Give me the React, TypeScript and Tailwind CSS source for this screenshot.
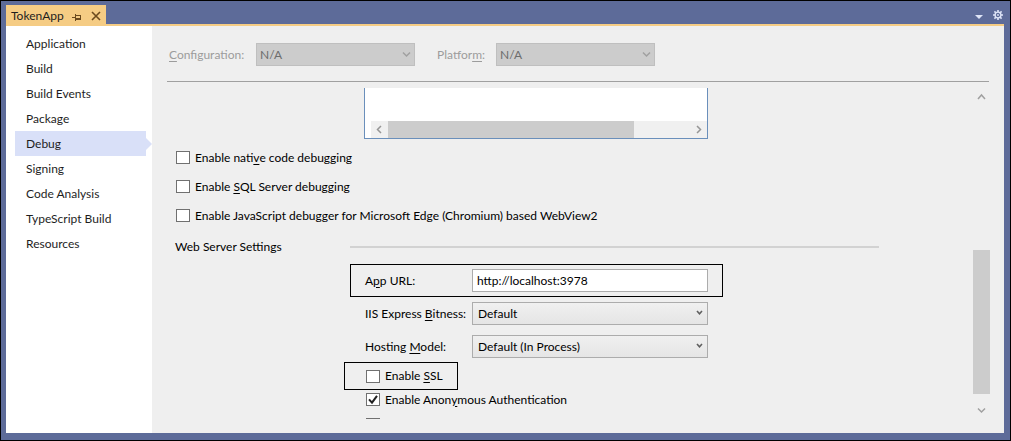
import type { ReactNode } from "react";

const pages = [
  "Application",
  "Build",
  "Build Events",
  "Package",
  "Debug",
  "Signing",
  "Code Analysis",
  "TypeScript Build",
  "Resources",
];

function Key({ children }: { children: ReactNode }) {
  return <span className="underline underline-offset-2">{children}</span>;
}

function Chevron({ className, d, size = 9 }: { className: string; d: string; size?: number }) {
  return (
    <svg className={className} width={size} height={size} viewBox="0 0 9 9" fill="none" stroke="currentColor" aria-hidden="true">
      <path d={d} strokeWidth="1.5" />
    </svg>
  );
}

const DOWN = "M1 2.5 4.5 6 8 2.5";
const UP = "M1 7 4.5 3 8 7";
const LEFT = "M6 1 2.5 4.5 6 8";
const RIGHT = "M3 1 6.5 4.5 3 8";

function DisabledSelect({ id, label }: { id: string; label: ReactNode }) {
  return (
    <div className="flex items-center">
      <label htmlFor={id} className="text-[#9c9c9c]">
        {label}
      </label>
      <div className="relative ml-auto w-[159px]">
        <select
          id={id}
          disabled
          className="block h-[23px] w-full appearance-none border border-[#bfbfbf] bg-[#cccccc] px-[3px] text-[#6d6d6d] opacity-100"
        >
          <option>N/A</option>
        </select>
        <Chevron className="pointer-events-none absolute right-1 top-[7px] text-[#a0a0a0]" d={DOWN} />
      </div>
    </div>
  );
}

function FormSelect({ id, label, value }: { id: string; label: ReactNode; value: string }) {
  return (
    <div className="ml-[190px] flex items-center">
      <label htmlFor={id} className="w-[107px] shrink-0 whitespace-nowrap">
        {label}
      </label>
      <div className="relative w-[236px]">
        <select
          id={id}
          className="block h-[23px] w-full appearance-none border border-[#acacac] bg-linear-to-b from-[#f0f0f0] to-[#e5e5e5] px-[5px] text-black"
        >
          <option>{value}</option>
        </select>
        <svg className="pointer-events-none absolute right-[5px] top-2 text-[#606060]" width="7" height="6" viewBox="0 0 7 6" fill="none" stroke="currentColor" aria-hidden="true">
          <path d="M1 1 3.5 3.8 6 1" strokeWidth="1.6" />
        </svg>
      </div>
    </div>
  );
}

function Check({ children, checked = false }: { children?: ReactNode; checked?: boolean }) {
  return (
    <label className="flex h-[13px] items-center gap-[5px] whitespace-nowrap">
      <span className="grid h-[13px] w-[14px] shrink-0">
        <input
          type="checkbox"
          defaultChecked={checked}
          className="peer col-start-1 row-start-1 h-[13px] w-[14px] appearance-none border border-[#707070] bg-white"
        />
        <svg className="pointer-events-none invisible col-start-1 row-start-1 peer-checked:visible" width="14" height="13" viewBox="0 0 14 13" fill="none" aria-hidden="true">
          <path d="M3 6.3 6 9.6 11 2.8" stroke="#212121" strokeWidth="2" />
        </svg>
      </span>
      <span>{children}</span>
    </label>
  );
}

export default function App() {
  return (
    <div className="flex h-screen flex-col border border-black bg-[#5d6b99] pb-[7px] pl-[5px] pr-1.5 pt-1 font-['Lato','Open_Sans',sans-serif] text-[12px] leading-4 text-black">
      <header className="flex h-[21px] shrink-0 items-stretch border-b-2 border-[#f5cc84]">
        <div className="flex w-[100px] items-center bg-[#f5cc84] pl-[5px] pr-[5px] text-[#1e1e1e]">
          <span className="pt-[3px]">TokenApp</span>
          <button aria-label="Pin tab" className="ml-auto mt-1 text-[#6b4a1e]">
            <svg width="9" height="8" viewBox="0 0 9 8" fill="none" stroke="currentColor" shapeRendering="crispEdges">
              <path d="M0 4.5H3.5M3.5 1V8M3.5 2.5H8.5V5.5H3.5M3.5 6H9" />
            </svg>
          </button>
          <button aria-label="Close tab" className="ml-2.5 mt-0.5 text-[#6b4a1e]">
            <svg width="10" height="10" viewBox="0 0 10 10" fill="none" stroke="currentColor">
              <path d="M1 1 9 9M9 1 1 9" strokeWidth="1.6" />
            </svg>
          </button>
        </div>
        <div className="ml-auto flex items-center gap-2.5 pr-px text-[#dfe5f8]">
          <button aria-label="Window list">
            <svg className="mt-1" width="8" height="4" viewBox="0 0 8 4" fill="currentColor">
              <path d="M0 0H8L4 4Z" />
            </svg>
          </button>
          <button aria-label="Options">
            <svg width="10" height="10" viewBox="0 0 10 10" fill="none" stroke="currentColor">
              <circle cx="5" cy="5" r="2.9" strokeWidth="1.4" />
              <circle cx="5" cy="5" r="0.9" fill="currentColor" stroke="none" />
              <path d="M5 0V2M5 8V10M0 5H2M8 5H10M1.4 1.4 2.8 2.8M7.2 7.2 8.6 8.6M8.6 1.4 7.2 2.8M2.8 7.2 1.4 8.6" strokeWidth="1.6" />
            </svg>
          </button>
        </div>
      </header>

      <div className="flex min-h-0 flex-1">
        <nav className="flex w-[146px] shrink-0 flex-col bg-white pl-[9px] pt-[5px] text-[#1e1e1e]">
          {pages.map((page) =>
            page === "Debug" ? (
              <a key={page} href="#debug" aria-current="page" className="flex h-[25px] items-center">
                <span className="flex h-full flex-1 items-center bg-[#d9e0f8] pl-[11px]">{page}</span>
                <svg width="6" height="12" viewBox="0 0 6 12" fill="#d9e0f8" aria-hidden="true">
                  <path d="M0 0 6 6 0 12Z" />
                </svg>
              </a>
            ) : (
              <a key={page} href="#page" className="flex h-[25px] items-center pl-[11px]">
                {page}
              </a>
            ),
          )}
        </nav>

        <main className="flex min-w-0 flex-1 flex-col bg-[#efefef] pb-[14px] pl-[15px] pr-[14px] pt-[17px]">
          <div className="flex shrink-0 gap-[22px] pl-0.5">
            <div className="w-[246px]">
              <DisabledSelect id="configuration" label={<><Key>C</Key>onfiguration:</>} />
            </div>
            <div className="w-[218px]">
              <DisabledSelect id="platform" label={<>Platfor<Key>m</Key>:</>} />
            </div>
          </div>
          <hr className="mr-px mt-[15px] shrink-0 border-t border-[#a0a0a0]" />

          <div className="mt-1.5 flex min-h-0 flex-1">
            <section className="flex min-w-0 flex-1 flex-col overflow-hidden pl-2">
              <div className="ml-[189px] w-[344px] shrink-0 border border-t-0 border-[#6a8fbb] bg-white pl-1.5 pt-[33px]">
                <div className="flex h-[17px] items-center bg-[#f0f0f0] text-[#969696]">
                  <Chevron className="mx-1 shrink-0" d={LEFT} />
                  <div className="h-full w-[246px] bg-[#cccccc]" />
                  <Chevron className="ml-auto mr-1 shrink-0" d={RIGHT} />
                </div>
              </div>

              <div className="mt-3 flex shrink-0 flex-col gap-4 pl-px">
                <Check>Enable nati<Key>v</Key>e code debugging</Check>
                <Check>Enable <Key>S</Key>QL Server debugging</Check>
                <Check>Enable JavaScript debugger for Microsoft Edge (Chromium) based WebView2</Check>
              </div>

              <div className="mt-[17px] flex shrink-0 items-center">
                <h2 className="w-[175px] shrink-0">Web Server Settings</h2>
                <div className="mr-[94px] h-0.5 flex-1 bg-[#d2d2d2]" />
              </div>

              <div className="ml-[175px] mt-[9px] flex h-[33px] w-[373px] shrink-0 items-center border border-black pl-3.5">
                <label htmlFor="app-url" className="w-[107px]">
                  A<Key>p</Key>p URL:
                </label>
                <input
                  id="app-url"
                  type="text"
                  defaultValue="http://localhost:3978"
                  className="h-[23px] w-[236px] border border-[#acacac] bg-white px-1"
                />
              </div>

              <div className="mt-[5px] flex shrink-0 flex-col gap-2.5">
                <FormSelect id="bitness" label={<>IIS Express <Key>B</Key>itness:</>} value="Default" />
                <FormSelect id="hosting" label={<>Hosting <Key>M</Key>odel:</>} value="Default (In Process)" />
              </div>

              <div className="ml-[169px] mt-1 flex h-7 w-[114px] shrink-0 items-center border border-black pl-[21px]">
                <Check>Enable <Key>S</Key>SL</Check>
              </div>

              <div className="ml-[191px] mt-[3px] flex shrink-0 flex-col gap-3">
                <Check checked>Enable Anon<Key>y</Key>mous Authentication</Check>
                <Check />
              </div>
            </section>

            <div className="flex w-[17px] shrink-0 flex-col items-center text-[#a0a0a0]">
              <Chevron className="my-1 shrink-0" d={UP} />
              <div className="min-h-0 flex-[145]" />
              <div className="min-h-0 w-full flex-[144] bg-[#cccccc]" />
              <div className="min-h-0 flex-[8]" />
              <Chevron className="my-1 shrink-0" d={DOWN} />
            </div>
          </div>
        </main>
      </div>
    </div>
  );
}
